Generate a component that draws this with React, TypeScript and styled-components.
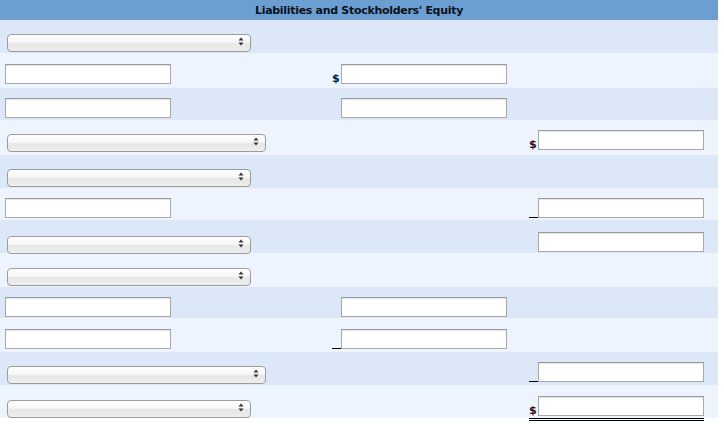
import styled, { createGlobalStyle } from "styled-components";

type Mark = "$" | "_" | "" | undefined;

interface Cell {
  mark?: Mark;
  total?: boolean;
}

interface RowData {
  h: number;
  pb: number;
  left?: "input" | "select" | "selectWide";
  mid?: Cell;
  right?: Cell;
}

// 12 rows of the balance sheet section
const rows: RowData[] = [
  { h: 33, pb: 3, left: "select" },
  { h: 35, pb: 4, left: "input", mid: { mark: "$" } },
  { h: 32, pb: 2, left: "input", mid: { mark: "" } },
  { h: 35, pb: 5, left: "selectWide", right: { mark: "$" } },
  { h: 33, pb: 3, left: "select" },
  { h: 32, pb: 2, left: "input", right: { mark: "_" } },
  { h: 33, pb: 1, left: "select", right: { mark: "" } },
  { h: 34, pb: 3, left: "select" },
  { h: 31, pb: 1, left: "input", mid: { mark: "" } },
  { h: 34, pb: 3, left: "input", mid: { mark: "_" } },
  { h: 33, pb: 3, left: "selectWide", right: { mark: "_" } },
  { h: 33, pb: 2, left: "select", right: { mark: "$", total: true } },
];

function Arrows() {
  return (
    <ArrowIcon width="6" height="9" viewBox="0 0 6 9">
      <path d="M3 0.5 L5.5 3.5 L0.5 3.5 Z" fill="#333" />
      <path d="M3 8.5 L5.5 5.5 L0.5 5.5 Z" fill="#333" />
    </ArrowIcon>
  );
}

function AmountCell({ cell }: { cell: Cell }) {
  return (
    <Amount>
      <Symbol>{cell.mark === "$" ? "$" : cell.mark === "_" ? <Underscore /> : null}</Symbol>
      <TextInput type="text" />
      {cell.total && <DoubleRule />}
    </Amount>
  );
}

export default function App() {
  return (
    <>
      <GlobalStyle />
      <Table>
        <Header>Liabilities and Stockholders' Equity</Header>
        {rows.map((r, i) => (
          <Row key={i} $h={r.h} $pb={r.pb} $alt={i % 2 === 1}>
            <LeftCell>
              {r.left === "input" ? (
                <TextInput type="text" />
              ) : (
                <SelectWrap $wide={r.left === "selectWide"}>
                  <Select>
                    <option></option>
                  </Select>
                  <Arrows />
                </SelectWrap>
              )}
            </LeftCell>
            <MidCell>{r.mid && <AmountCell cell={r.mid} />}</MidCell>
            <RightCell>{r.right && <AmountCell cell={r.right} />}</RightCell>
          </Row>
        ))}
      </Table>
    </>
  );
}

/* ---------------- Styled Components ---------------- */

const GlobalStyle = createGlobalStyle`
  html, body {
    margin: 0;
    background: #ffffff;
    font-family: "DejaVu Sans", Verdana, sans-serif;
  }
  #root {
    min-height: 429px;
  }
`;

const Table = styled.div`
  width: 718px;
  display: flex;
  flex-direction: column;
  padding-bottom: 8px;
`;

const Header = styled.div`
  height: 20px;
  background: #6b9fd2;
  color: #0b1020;
  font-size: 11px;
  font-weight: bold;
  letter-spacing: -0.3px;
  display: flex;
  align-items: center;
  justify-content: center;
  padding-top: 1px;
  box-sizing: border-box;
`;

const Row = styled.div<{ $h: number; $pb: number; $alt: boolean }>`
  flex: none;
  height: ${(p) => p.$h}px;
  background: ${(p) => (p.$alt ? "#edf4fe" : "#dce7f8")};
  display: grid;
  grid-template-columns: 330px 198px 190px;
  align-items: end;
  padding-bottom: ${(p) => p.$pb}px;
  box-sizing: border-box;
`;

const LeftCell = styled.div`
  padding-left: 5px;
  display: flex;
  align-items: flex-end;
`;

const MidCell = styled.div`
  padding-left: 2px;
  display: flex;
  align-items: flex-end;
`;

const RightCell = styled.div`
  padding-left: 1px;
  display: flex;
  align-items: flex-end;
`;

const Amount = styled.div`
  position: relative;
  display: flex;
  align-items: flex-end;
`;

// double rule under the grand total
const DoubleRule = styled.div`
  position: absolute;
  left: 0;
  right: 0;
  top: 22px;
  height: 3px;
  box-sizing: border-box;
  border-top: 1px solid #000;
  border-bottom: 1px solid #000;
  z-index: 2;
`;

const Symbol = styled.span`
  width: 9px;
  height: 20px;
  display: flex;
  align-items: flex-end;
  font-size: 11px;
  font-weight: bold;
  color: #10142e;
  line-height: 11px;
`;

const Underscore = styled.span`
  display: block;
  width: 9px;
  height: 0;
  border-bottom: 1px solid #000;
`;

const TextInput = styled.input`
  width: 166px;
  height: 20px;
  box-sizing: border-box;
  margin: 0;
  border: 1px solid #a8a8a8;
  border-top-color: #9a9a9a;
  box-shadow: inset 0 1px 1px #e4e4e4;
  background: #fff;
  padding: 0 3px;
  font-size: 11px;
  font-family: "DejaVu Sans", Verdana, sans-serif;
  outline: none;
`;

const SelectWrap = styled.div<{ $wide: boolean }>`
  position: relative;
  margin-left: 2px;
  width: ${(p) => (p.$wide ? "259px" : "244px")};
  height: 18px;
`;

const Select = styled.select`
  appearance: none;
  -webkit-appearance: none;
  width: 100%;
  height: 100%;
  margin: 0;
  box-sizing: border-box;
  border: 1px solid #9c9c9c;
  border-radius: 4px;
  background: linear-gradient(#ffffff 0%, #f6f6f6 45%, #e6e6e6 55%, #eeeeee 100%);
  font-size: 11px;
  outline: none;
`;

const ArrowIcon = styled.svg`
  position: absolute;
  right: 7px;
  top: 5px;
  pointer-events: none;
`;
